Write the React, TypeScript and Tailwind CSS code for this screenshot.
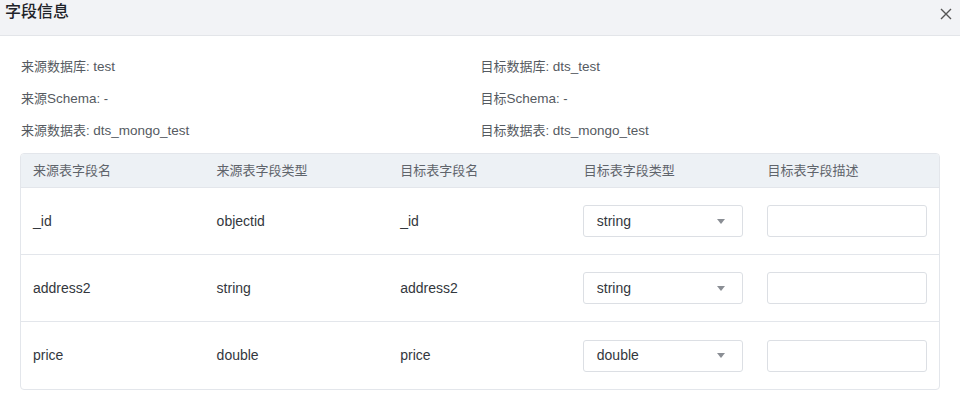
const font = 'font-["Helvetica_Neue","Liberation_Sans","Noto_Sans_CJK_SC",sans-serif]';

const rows = [
  { src: '_id', srcType: 'objectid', dst: '_id', dstType: 'string' },
  { src: 'address2', srcType: 'string', dst: 'address2', dstType: 'string' },
  { src: 'price', srcType: 'double', dst: 'price', dstType: 'double' },
];

const headers = ['来源表字段名', '来源表字段类型', '目标表字段名', '目标表字段类型', '目标表字段描述'];

export default function App() {
  return (
    <div className={`w-[960px] h-[395px] bg-white overflow-hidden ${font}`}>
      {/* Header */}
      <div className="h-[36px] bg-[#f2f3f6] border-b border-[#e3e5e9] flex items-center justify-between pl-[5px] pr-[8px]">
        <span className="text-[16px] font-medium text-[#1f2329] -mt-[12px]">字段信息</span>
        <svg width="12" height="12" viewBox="0 0 12 12" className="-mt-[8px]">
          <path d="M1 1 L11 11 M11 1 L1 11" stroke="#555" strokeWidth="1.4" />
        </svg>
      </div>

      <div className="px-[20px]">
        <div className="grid grid-cols-2 pl-[1px] pt-[22px] text-[13px] text-[#555a61] leading-[18px]">
          <div className="h-[32px]">来源数据库: <span className="text-[13.5px]">test</span></div>
          <div className="h-[32px]">目标数据库: <span className="text-[13.5px]">dts_test</span></div>
          <div className="h-[32px]">来源<span className="text-[13.5px]">Schema</span>: -</div>
          <div className="h-[32px]">目标<span className="text-[13.5px]">Schema</span>: -</div>
          <div className="h-[31px]">来源数据表: <span className="text-[13.5px]">dts_mongo_test</span></div>
          <div className="h-[31px]">目标数据表: <span className="text-[13.5px]">dts_mongo_test</span></div>
        </div>

        {/* Table */}
        <div className="border border-[#e3e6eb] rounded-[4px] overflow-hidden w-[920px]">
          <div className="grid grid-cols-5 h-[34px] bg-[#edf1f5] border-b border-[#e3e6eb] items-center text-[13px] text-[#5f646b]">
            {headers.map(h => (
              <div key={h} className="pl-[12px]">{h}</div>
            ))}
          </div>
          {rows.map((r, i) => (
            <div
              key={r.src}
              className={`grid grid-cols-5 h-[67px] items-center text-[14px] text-[#33373d] ${i < rows.length - 1 ? 'border-b border-[#e3e6eb]' : ''}`}
            >
              <div className="pl-[12px]">{r.src}</div>
              <div className="pl-[12px]">{r.srcType}</div>
              <div className="pl-[12px]">{r.dst}</div>
              <div className="pl-[11px]">
                <div className="w-[160px] h-[32px] border border-[#dcdfe4] rounded-[3px] flex items-center justify-between pl-[13px] pr-[17px]">
                  <span>{r.dstType}</span>
                  <svg width="8" height="5" viewBox="0 0 8 5">
                    <path d="M0 0 L8 0 L4 5 Z" fill="#8a8e94" />
                  </svg>
                </div>
              </div>
              <div className="pl-[12px]">
                <div className="w-[160px] h-[32px] border border-[#dcdfe4] rounded-[3px]" />
              </div>
            </div>
          ))}
        </div>
      </div>
    </div>
  );
}
